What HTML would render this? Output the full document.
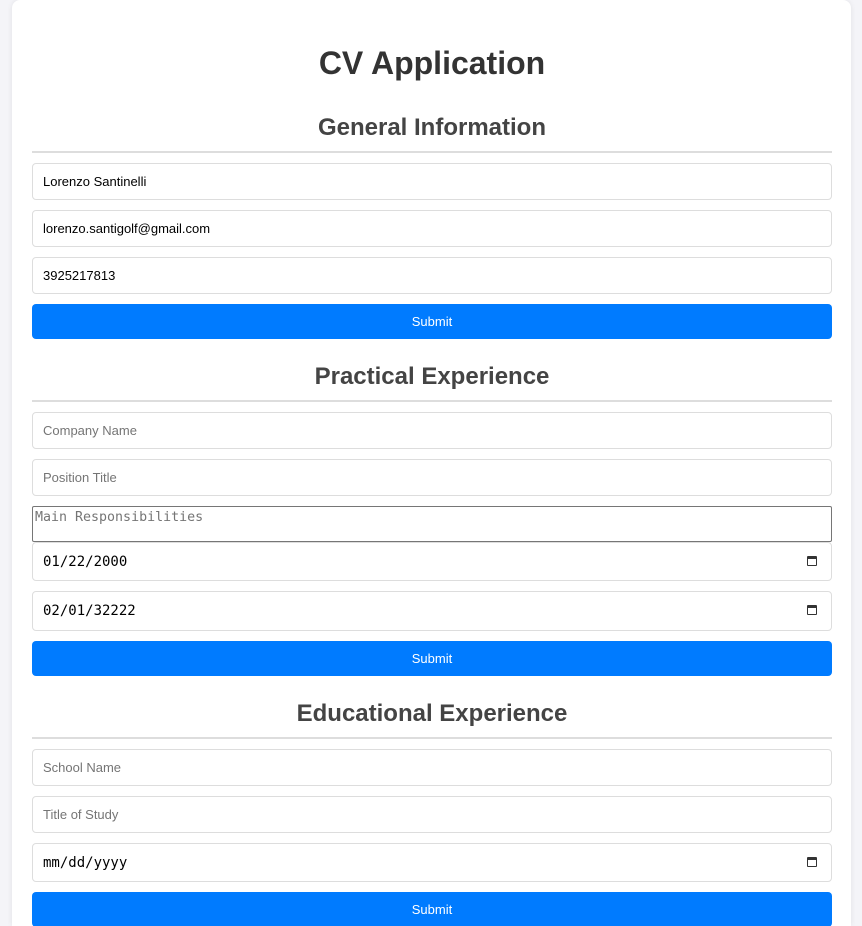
<!DOCTYPE html>
<html style="height:926px;overflow:hidden"><head><style>
body{margin:0;background:#f4f4f8;font-family:"Liberation Sans",sans-serif;width:862px;height:926px;overflow:hidden;position:relative}
.card{position:absolute;left:12px;top:0;width:839px;height:926px;background:#fff;border-radius:8px 8px 0 0;box-shadow:0 0 6px rgba(0,0,0,.08)}
.a{position:absolute;left:32px;width:800px;box-sizing:border-box}
h1,h2{margin:0;text-align:center;font-weight:bold}
h1{font-size:32px;color:#333;line-height:40px}
h2{font-size:24px;color:#444;line-height:30px}
.line{height:2px;background:#ddd}
.in{border:1px solid #ddd;border-radius:4px;height:37px;font-size:13px;padding:0 10px;display:flex;align-items:center;color:#000}
.ph{color:#757575}
.date{font-family:"DejaVu Sans Mono","Liberation Mono",monospace;font-size:14px}
.btn{background:#007bff;color:#fff;border-radius:4px;height:35px;font-size:13px;display:flex;align-items:center;justify-content:center}
.ta{border:1px solid #767676;border-radius:2px;height:36px;font-family:"DejaVu Sans Mono",monospace;font-size:13.3px;color:#757575;padding:2px 2px}
.cal{position:absolute;right:14px;top:50%;margin-top:-6px;width:10px;height:10px;border:1.5px solid #333;border-top-width:3px;border-radius:1px;box-sizing:border-box}
</style></head><body>
<div class="card"></div>
<h1 class="a" style="top:43px">CV Application</h1>
<h2 class="a" style="top:113px">General Information</h2>
<div class="a line" style="top:151px"></div>
<div class="a in" style="top:163px">Lorenzo Santinelli</div>
<div class="a in" style="top:210px">lorenzo.santigolf@gmail.com</div>
<div class="a in" style="top:257px">3925217813</div>
<div class="a btn" style="top:304px">Submit</div>
<h2 class="a" style="top:362px">Practical Experience</h2>
<div class="a line" style="top:400px"></div>
<div class="a in ph" style="top:412px">Company Name</div>
<div class="a in ph" style="top:459px">Position Title</div>
<div class="a ta" style="top:506px;padding-top:3px">Main Responsibilities</div>
<div class="a in date" style="top:542px;height:39px">01/22/2000<span class="cal"></span></div>
<div class="a in date" style="top:591px;height:40px">02/01/32222<span class="cal"></span></div>
<div class="a btn" style="top:641px">Submit</div>
<h2 class="a" style="top:699px">Educational Experience</h2>
<div class="a line" style="top:737px"></div>
<div class="a in ph" style="top:749px">School Name</div>
<div class="a in ph" style="top:796px">Title of Study</div>
<div class="a in date" style="top:843px;height:39px">mm/dd/yyyy<span class="cal"></span></div>
<div class="a btn" style="top:892px">Submit</div>
</body></html>
